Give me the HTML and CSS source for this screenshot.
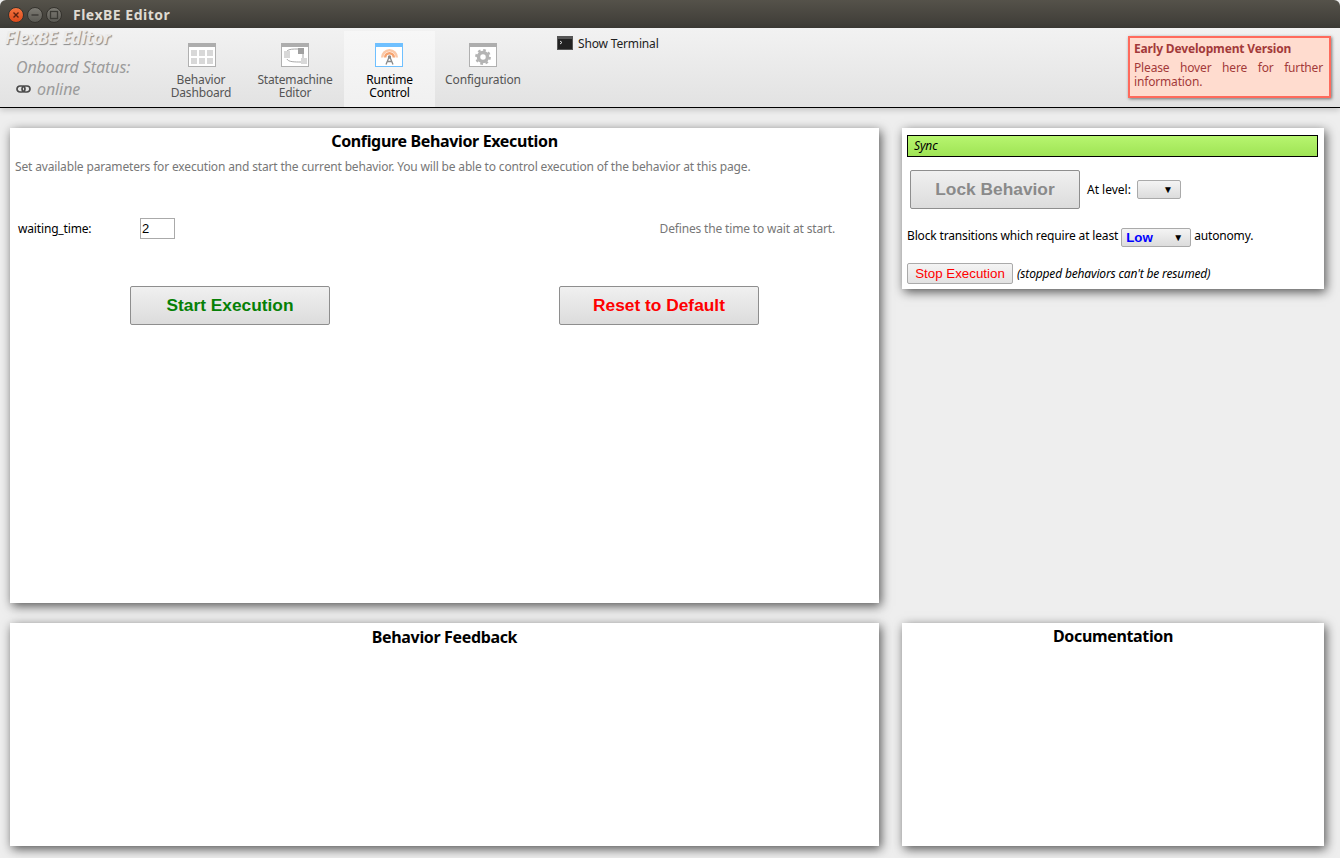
FILE: index.html
```html
<!DOCTYPE html>
<html lang="en">
<head>
<meta charset="utf-8">
<title>FlexBE Editor</title>
<link rel="stylesheet" href="styles.css">
</head>
<body>
<div class="titlebar">
  <div class="winbtns">
    <span class="winbtn close"><svg width="10" height="10" viewBox="0 0 10 10"><path d="M2.5 2.5l5 5M7.5 2.5l-5 5" stroke="#5a2110" stroke-width="1.4" fill="none"/></svg></span>
    <span class="winbtn"><svg width="10" height="10" viewBox="0 0 10 10"><path d="M1.5 5h7" stroke="#3b3a35" stroke-width="1.4" fill="none"/></svg></span>
    <span class="winbtn"><svg width="10" height="10" viewBox="0 0 10 10"><rect x="1.5" y="1.5" width="7" height="7" stroke="#3b3a35" stroke-width="1.3" fill="none"/></svg></span>
  </div>
  <div class="wintitle">FlexBE Editor</div>
</div>
<header class="toolbar">
  <div class="brand">
    <div class="logo">FlexBE Editor</div>
    <div class="status">Onboard Status:</div>
    <div class="status online">
      <svg class="link-icon" width="15" height="8" viewBox="0 0 15 8"><rect x="1" y="1" width="8" height="6" rx="3" fill="none" stroke="#4a4a4a" stroke-width="1.7"/><rect x="6" y="1" width="8" height="6" rx="3" fill="none" stroke="#4a4a4a" stroke-width="1.7"/></svg>
      <span>online</span>
    </div>
  </div>
  <nav class="tabs">
    <div class="tab first">
      <svg class="tab-icon" width="28" height="24" viewBox="0 0 28 24"><rect x=".5" y=".5" width="27" height="23" fill="#fff" stroke="#b0b0b0"/><rect width="28" height="4" fill="#adadad"/><g fill="#d8d8d8"><rect x="3" y="7" width="6" height="6"/><rect x="11" y="7" width="6" height="6"/><rect x="19" y="7" width="6" height="6"/><rect x="3" y="15" width="6" height="6"/><rect x="11" y="15" width="6" height="6"/><rect x="19" y="15" width="6" height="6"/></g></svg>
      <span>Behavior<br>Dashboard</span>
    </div>
    <div class="tab second">
      <svg class="tab-icon" width="28" height="24" viewBox="0 0 28 24"><rect x=".5" y=".5" width="27" height="23" fill="#fff" stroke="#b0b0b0"/><rect width="28" height="4" fill="#adadad"/><path d="M6 8c2-2 6-2 11-2M6 16c1 3 8 3 14 3M22 11v4" fill="none" stroke="#a8a8a8" stroke-width="1"/><rect x="3" y="8" width="6" height="7" fill="#d8d8d8"/><rect x="17" y="5" width="6" height="6" fill="#a0a0a0"/><rect x="20" y="15" width="6" height="6" fill="#d8d8d8"/></svg>
      <span>Statemachine<br>Editor</span>
    </div>
    <div class="tab active">
      <svg class="tab-icon" width="28" height="24" viewBox="0 0 28 24"><rect x=".5" y=".5" width="27" height="23" fill="#fff" stroke="#6fc0ff"/><rect width="28" height="4" fill="#6fc0ff"/><path d="M7.200 14.500a7.300 7.300 0 0 1 14.600 0" fill="none" stroke="#fbc9a8" stroke-width="2.500"/><path d="M10.200 14.500a4.300 4.300 0 0 1 8.600 0" fill="none" stroke="#f7a470" stroke-width="2.500"/><path d="M14.500 13l-3.500 8.500M14.500 13l3.500 8.500M12 18.500h5" fill="none" stroke="#8a8a8a" stroke-width="1.300"/><circle cx="14.500" cy="14" r="1.700" fill="#888"/></svg>
      <span>Runtime<br>Control</span>
    </div>
    <div class="tab">
      <svg class="tab-icon" width="28" height="24" viewBox="0 0 28 24"><rect x=".5" y=".5" width="27" height="23" fill="#fff" stroke="#b0b0b0"/><rect width="28" height="4" fill="#adadad"/><circle cx="14" cy="14" r="4.500" fill="none" stroke="#b4b4b4" stroke-width="3.500"/><circle cx="14" cy="14" r="6.800" fill="none" stroke="#b4b4b4" stroke-width="2.200" stroke-dasharray="2.670 2.670"/></svg>
      <span>Configuration</span>
    </div>
  </nav>
  <div class="terminal">
    <svg width="16" height="14" viewBox="0 0 16 14"><rect width="16" height="14" fill="#555"/><rect x="1" y="3" width="14" height="10" fill="#222"/><path d="M3 5l2 1.500-2 1.500" fill="none" stroke="#ddd"/></svg>
    <span>Show Terminal</span>
  </div>
  <aside class="notice">
    <div class="notice-title">Early Development Version</div>
    <div class="notice-text">Please hover here for further information.</div>
  </aside>
</header>
<main class="content">
  <section class="panel">
    <h2 class="panel-title">Configure Behavior Execution</h2>
    <p class="hint">Set available parameters for execution and start the current behavior. You will be able to control execution of the behavior at this page.</p>
    <div class="param">
      <label class="param-name">waiting_time:</label>
      <input class="param-input" type="text" value="2">
      <span class="param-doc">Defines the time to wait at start.</span>
    </div>
    <div class="actions">
      <button class="big-btn start">Start Execution</button>
      <button class="big-btn reset">Reset to Default</button>
    </div>
  </section>
  <section class="panel control">
    <div class="sync">Sync</div>
    <div class="lock-row">
      <button class="big-btn lock">Lock Behavior</button>
      <span class="ctl-text">At level:</span>
      <span class="select level"><span class="arrow">▼</span></span>
    </div>
    <div class="block-row">
      <span class="ctl-text">Block transitions which require at least</span>
      <span class="select autonomy"><b>Low</b><span class="arrow">▼</span></span>
      <span class="ctl-text">autonomy.</span>
    </div>
    <div class="stop-row">
      <button class="stop-btn">Stop Execution</button>
      <em class="ctl-text">(stopped behaviors can't be resumed)</em>
    </div>
  </section>
  <section class="panel">
    <h2 class="panel-title feedback">Behavior Feedback</h2>
  </section>
  <section class="panel">
    <h2 class="panel-title feedback doc">Documentation</h2>
  </section>
</main>
</body>
</html>
```
FILE: styles.css
```css
* { box-sizing: border-box; }
html, body { margin: 0; height: 100%; }
body {
  width: 1340px;
  height: 858px;
  overflow: hidden;
  background: #eeeeee;
  font-family: "Noto Sans", sans-serif;
  font-size: 12px;
  letter-spacing: -.16px;
  color: #000;
}
.titlebar {
  height: 28px;
  display: flex;
  align-items: center;
  padding: 1px 0 0 8px;
  background: linear-gradient(#55524a, #3d3b36);
  border-radius: 6px 6px 0 0;
}
.winbtns { display: flex; gap: 3px; width: 65px; }
.winbtn {
  width: 16px;
  height: 16px;
  border-radius: 50%;
  display: flex;
  align-items: center;
  justify-content: center;
  background: linear-gradient(#7d7b74, #5b5a54);
  border: 1px solid #35332e;
}
.winbtn.close { background: linear-gradient(#f5743f, #dd4a1c); }
.wintitle {
  color: #dfdbd2;
  font-weight: 700;
  font-size: 14px;
  letter-spacing: .5px;
}
.toolbar {
  height: 80px;
  display: flex;
  border-bottom: 1px solid #000;
  background: linear-gradient(#f2f2f2, #e2e2e2);
  box-shadow: 0 2px 6px rgba(0,0,0,.18);
  position: relative;
}
.brand { width: 154px; flex: none; padding-left: 5px; }
.logo {
  font-size: 17px;
  line-height: 20px;
  font-weight: 700;
  font-style: italic;
  letter-spacing: 0;
  color: #ececec;
  text-shadow: 1px 1px 1px #8a8a8a;
}
.status {
  margin: 9px 0 0 11px;
  font-size: 16px;
  line-height: 20px;
  font-style: italic;
  letter-spacing: -.1px;
  color: #9c9c9c;
}
.online { margin-top: 2px; display: flex; align-items: center; gap: 6px; }
.tabs { display: flex; }
.tab {
  width: 96px;
  padding-top: 15px;
  display: flex;
  flex-direction: column;
  align-items: center;
  text-align: center;
  font-size: 12px;
  line-height: 13px;
  color: #555;
}
.tab.first { width: 94px; }
.tab.first .tab-icon { margin-left: 1px; }
.tab.second { padding-right: 2px; }
.tab.active {
  width: 91px;
  padding-top: 15px;
  margin-top: 3px;
  background: linear-gradient(#f7f7f7, #f0f0f0);
  color: #000;
}
.tab-icon { margin-bottom: 6px; flex: none; }
.tab.active .tab-icon { margin-top: -3px; margin-right: 1px; }
.terminal {
  margin: 7px 0 0 26px;
  height: 16px;
  display: flex;
  align-items: center;
  gap: 5px;
  font-size: 12px;
  color: #222;
}
.notice {
  position: absolute;
  left: 1128px;
  top: 8px;
  width: 203px;
  height: 62px;
  padding: 4px 6px 4px 4px;
  background: #ffdccf;
  border: 2px solid #ff6a5c;
  box-shadow: 1px 1px 3px rgba(0,0,0,.5);
  color: #a33a3a;
  font-size: 12px;
  line-height: 14px;
}
.notice-title { font-weight: 700; margin-bottom: 5px; }
.notice-text { text-align: justify; }
.content {
  display: grid;
  grid-template-columns: 869px 422px;
  grid-template-rows: 475px 223px;
  column-gap: 23px;
  row-gap: 20px;
  padding: 20px 0 0 10px;
}
.panel {
  background: #fff;
  box-shadow: 2px 3px 10px rgba(0,0,0,.65);
}
.panel.control { align-self: start; height: 161px; padding: 7px 5px; }
.panel-title {
  margin: 0;
  padding-top: 2px;
  text-align: center;
  font-size: 16px;
  line-height: 22px;
  font-weight: 700;
  letter-spacing: -.35px;
}
.panel-title.feedback { padding-top: 3px; }
.panel-title.doc { padding-top: 2px; }
.hint {
  margin: 7px 0 0 5px;
  font-size: 12px;
  line-height: 16px;
  color: #777;
}
.param {
  display: flex;
  align-items: center;
  height: 21px;
  margin: 43px 0 0 8px;
  color: #000;
}
.param-name { width: 122px; }
.param-input {
  width: 35px;
  height: 21px;
  padding: 0 1px;
  border: 1px solid #aaa;
  font: 13px "Liberation Sans", sans-serif;
  border-radius: 0;
  background: #fff;
}
.param-doc { margin-left: auto; margin-right: 44px; color: #777; }
.actions { display: flex; margin: 47px 0 0 120px; gap: 229px; }
.big-btn {
  width: 200px;
  height: 39px;
  padding: 0;
  border: 1px solid #8e8e8e;
  border-radius: 2px;
  background: linear-gradient(#f0f0f0, #dcdcdc);
  font: 700 17.33px "Liberation Sans", sans-serif;
}
.start { color: #068006; }
.reset { color: #f00; }
.sync {
  height: 22px;
  margin-right: 1px;
  padding-left: 6px;
  border: 1px solid #000;
  background: linear-gradient(#b7f56f, #9fe455);
  font-style: italic;
  font-size: 12px;
  line-height: 20px;
}
.lock-row { display: flex; align-items: center; margin: 13px 0 0 3px; }
.lock { width: 170px; color: #8a8a8a; }
.ctl-text { font-size: 12px; color: #000; }
.lock-row .ctl-text { margin: 0 6px 0 7px; letter-spacing: 0; }
.select {
  display: inline-flex;
  align-items: center;
  justify-content: flex-end;
  height: 19px;
  padding-right: 7px;
  border: 1px solid #aaa;
  border-radius: 2px;
  background: linear-gradient(#f4f4f4, #dcdcdc);
  font: 13.33px "Liberation Sans", sans-serif;
  letter-spacing: 0;
}
.level { width: 44px; }
.autonomy {
  width: 70px;
  margin: 4px 3px 0;
  justify-content: space-between;
  padding-left: 4px;
  color: #00f;
}
.arrow { font-size: 10px; color: #000; }
.block-row { display: flex; align-items: center; margin-top: 15px; }
.stop-row { display: flex; align-items: center; gap: 4px; margin-top: 16px; }
.stop-btn {
  width: 106px;
  height: 21px;
  padding: 0;
  border: 1px solid #aaa;
  border-radius: 2px;
  background: linear-gradient(#f4f4f4, #e2e2e2);
  color: #f00;
  font: 13.33px "Liberation Sans", sans-serif;
}
```
